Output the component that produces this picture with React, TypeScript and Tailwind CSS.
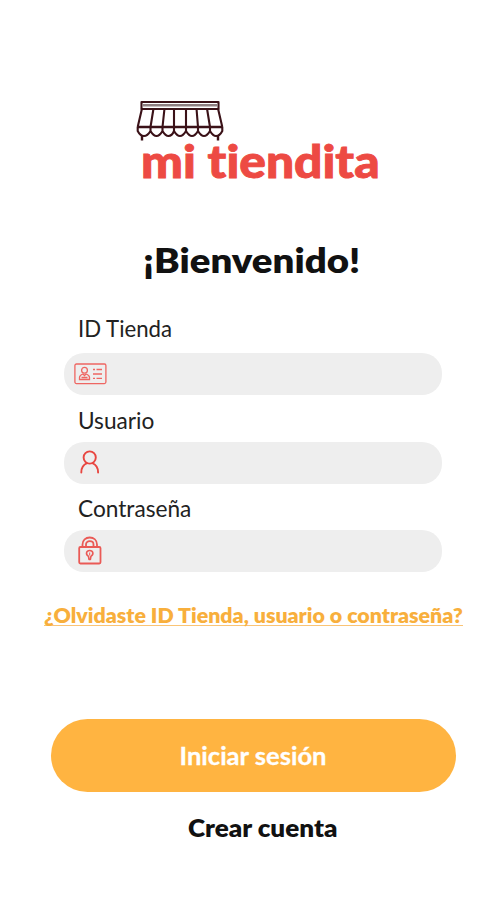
import React from 'react';

function Awning() {
  return (
    <svg className="ml-[136px] block h-[43px] w-[88px]" viewBox="0 0 88 43" fill="none" stroke="#3b1218" strokeWidth="2.1" strokeLinejoin="round">
      <path d="M5.5 3H82.5V10H5.5Z" />
      <path d="M6 6.3H82" stroke="#8f8082" strokeWidth="2.4" />
      <path d="M6 9.5L1.7 28M17.5 9.5L14.5 28M28.5 9.5L26.5 28M38 9.5V28M50 9.5V28M60.5 9.5L62 28M71 9.5L74 28M82 9.5L86.3 28" />
      <path d="M1.7 28H86.3" strokeWidth="2.4" />
      <path d="M1.7 28V32C3 34.5 5.5 37 8 37S13 34.5 14.5 32V28M14.5 32C16 34.5 18 37 20.5 37S25 34.5 26.5 32V28M26.5 32C28 34.5 30 37 32.5 37S37 34.5 38 32V28M38 32C39.5 34.5 41.5 37 44 37S48.5 34.5 50 32V28M50 32C51.5 34.5 53.5 37 56 37S60.5 34.5 62 32V28M62 32C63.5 34.5 65.5 37 68 37S72.5 34.5 74 32V28M74 32C75.5 34.5 77.5 37 80 37S85 34.5 86.3 32V28" />
      <path d="M6 36.5V41.5M82 36.5V41.5" strokeWidth="2.4" />
    </svg>
  );
}

function IdCard() {
  return (
    <svg className="ml-[10px] h-[22px] w-[33px]" viewBox="0 0 33 22" fill="none" stroke="#ee6662" strokeWidth="1.3">
      <rect x="0.9" y="1" width="31" height="19.6" rx="1.5" />
      <circle cx="10.5" cy="7.3" r="2.9" />
      <path d="M5.5 16.5V14.5C5.5 12.5 7.5 11.5 9 11L10.5 12.5L12 11C13.5 11.5 15.5 12.5 15.5 14.5V16.5ZM7.5 14.5H13.5" />
      <path d="M19 6.5H21M22.5 6.5H28M19 11H28M19 15.3H21M22.5 15.3H28" />
    </svg>
  );
}

function User() {
  return (
    <svg className="-mt-[2px] ml-[16px] h-[24px] w-[20px]" viewBox="0 0 20 24" fill="none" stroke="#e84640" strokeWidth="1.9" strokeLinecap="round">
      <circle cx="9.7" cy="7.5" r="6.1" />
      <path d="M7 13.2C3.5 14.7 1.3 18 1.3 22.5M12.4 13.2C15.9 14.7 18.1 18 18.1 22.5" />
    </svg>
  );
}

function Lock() {
  return (
    <svg className="ml-[14px] h-[29px] w-[24px]" viewBox="0 0 24 29" fill="none" stroke="#ea5a56" strokeWidth="1.8" strokeLinejoin="round">
      <rect x="1.2" y="11" width="21.3" height="16.5" rx="1.2" />
      <path d="M4.5 11V8.5C4.5 4 7.7 1.5 11.7 1.5S19 4 19 8.5V11M8 11V8.500C8 6.500 9.500 5.200 11.700 5.200S15.500 6.500 15.500 8.500V11" />
      <path d="M10.5 20.3C7.2 18.2 8.3 14.5 11.7 14.5S16.2 18.2 12.9 20.3L12.4 23.5H11Z" strokeWidth="1.6" />
      <path d="M11.7 16.5V19.5" strokeWidth="1" />
    </svg>
  );
}

function Field({ label, labelWidth, gap, children }: { label: string; labelWidth: string; gap: string; children: React.ReactNode }) {
  return (
    <label className="block">
      <span className={`ml-[14.5px] block h-7 origin-left whitespace-nowrap text-[23px] leading-7 text-[#222] ${labelWidth}`}>{label}</span>
      <span className={`flex h-[42.5px] w-[378px] items-center rounded-[20px] bg-[#eee] ${gap}`}>{children}</span>
    </label>
  );
}

export default function App() {
  return (
    <main className="flex h-[900px] w-[504px] flex-col overflow-hidden bg-white pt-[99px] font-['Lato',sans-serif] [font-variant-ligatures:none]">
      <header className="h-[141px]">
        <Awning />
        <div className="-mt-[1px] ml-[140.5px] h-10 w-[220px] origin-left scale-x-[1.104] whitespace-nowrap text-[45px] leading-10 font-black text-[#ed4a43] [-webkit-text-stroke:0.9px_#ed4a43]">mi tiendita</div>
      </header>
      <h1 className="ml-[143px] h-10 w-[200px] origin-left scale-x-[1.13] whitespace-nowrap text-[34px] leading-10 font-extrabold text-[#111]">¡Bienvenido!</h1>
      <form className="mt-[34px] ml-[63.5px] flex flex-col">
        <Field label="ID Tienda" labelWidth="scale-x-[0.965]" gap="mt-[10.5px]"><IdCard /></Field>
        <div className="h-[11px]" />
        <Field label="Usuario" labelWidth="scale-x-[0.985]" gap="mt-[7.5px]"><User /></Field>
        <div className="h-[10px]" />
        <Field label="Contraseña" labelWidth="scale-x-[0.985]" gap="mt-[7.5px]"><Lock /></Field>
      </form>
      <a className="mt-[28px] ml-[44px] h-[26px] w-[419px] border-b border-b-[#fac476]">
        <span className="block w-[392px] origin-left scale-x-[1.068] whitespace-nowrap text-[20px] leading-[30px] font-extrabold text-[#f8af3c]">¿Olvidaste ID Tienda, usuario o contraseña?</span>
      </a>
      <button className="mt-[93px] ml-[50.5px] flex h-[72.5px] w-[405.5px] shrink-0 items-center justify-center rounded-full bg-[#ffb441] pt-px text-[24px] leading-7 font-bold text-white">
        <span className="scale-x-[1.065] [-webkit-text-stroke:0.3px_white]">Iniciar sesión</span>
      </button>
      <a className="mt-[22px] ml-[187.5px] h-7 w-[140px] origin-left scale-x-[1.085] whitespace-nowrap text-[24px] leading-7 font-extrabold text-[#111]">Crear cuenta</a>
    </main>
  );
}
